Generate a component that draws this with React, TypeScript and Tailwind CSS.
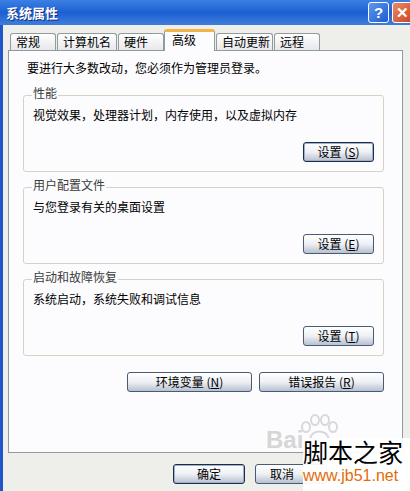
import type { ReactNode } from "react";

const XpButton = ({
  children,
  width,
  focus = false,
}: {
  children: ReactNode;
  width: string;
  focus?: boolean;
}) => (
  <button
    className={`${width} h-[20px] shrink-0 rounded-[3px] border ${
      focus
        ? "border-[#1c2c44] shadow-[inset_0_0_0_1px_#9fb0cb]"
        : "border-[#485a74]"
    } bg-gradient-to-b from-[#ffffff] via-[#eef0f4] to-[#b7c1d2] text-[12px] leading-[14px] text-black`}
  >
    {children}
  </button>
);

const Tab = ({
  label,
  width,
  ml,
  active = false,
}: {
  label: string;
  width: string;
  ml: string;
  active?: boolean;
}) =>
  active ? (
    <div
      className={`${width} ${ml} relative z-10 h-[22px] -mb-px rounded-t-[3px] border border-b-0 border-[#919b9c] border-t-[3px] border-t-[#f3b447] bg-[#fcfcfe] pl-[7px] pt-[1px] text-[12px] leading-[14px] text-black`}
    >
      {label}
    </div>
  ) : (
    <div
      className={`${width} ${ml} h-[17px] rounded-t-[3px] border border-b-0 border-[#919b9c] bg-gradient-to-b from-[#ffffff] to-[#e7e8ec] pl-[5px] pt-[1px] text-[12px] leading-[14px] text-black`}
    >
      {label}
    </div>
  );

const Group = ({
  title,
  text,
  hot,
  mt,
}: {
  title: string;
  text: string;
  hot: string;
  mt: string;
}) => (
  <div
    className={`relative ${mt} h-[77px] w-[361px] rounded-[3px] border border-[#d3d3c6] pl-[9px] pt-[12px]`}
  >
    <span className="absolute -top-[10px] left-[8px] bg-[#fcfcfe] px-px text-[12px] leading-[14px] text-[#3a3a3a]">
      {title}
    </span>
    <div className="text-[12px] leading-[14px] text-black">{text}</div>
    <div className="mt-[20px] flex justify-end pr-[9px]">
      <XpButton width="w-[71px]" focus={hot === "S"}>
        设置 (<u>{hot}</u>)
      </XpButton>
    </div>
  </div>
);

const App = () => {
  return (
    <div className="relative flex h-[491px] w-[410px] flex-col overflow-hidden bg-[#eeeeeb] font-['Noto_Sans_CJK_SC',sans-serif]">
      {/* Title bar */}
      <div className="flex h-[25px] shrink-0 items-center bg-gradient-to-b from-[#3b80e4] via-[#1d5fd2] to-[#3f7ddc] pl-[6px]">
        <span className="text-[13px] font-bold leading-[16px] text-white [text-shadow:1px_1px_0_#0c2f80]">
          系统属性
        </span>
        <div className="ml-auto mr-[-3px] flex gap-[3px]">
          <div className="flex h-[21px] w-[21px] items-center justify-center rounded-[3px] border border-white bg-gradient-to-br from-[#5d97f0] to-[#1e5bd0] font-['Liberation_Sans',sans-serif] text-[15px] font-bold leading-none text-white">
            ?
          </div>
          <div className="flex h-[21px] w-[21px] items-center justify-center rounded-[3px] border border-white bg-gradient-to-br from-[#ec8a66] to-[#c9421d] font-['Liberation_Sans',sans-serif] text-[15px] font-bold leading-none text-white">
            ✕
          </div>
        </div>
      </div>

      {/* Body */}
      <div className="flex flex-1 flex-col border-l-[3px] border-[#1f55c8] pl-[5px] pt-[4px]">
        {/* Tabs */}
        <div className="flex h-[21px] items-end">
          <Tab label="常规" width="w-[46px]" ml="ml-[2px]" />
          <Tab label="计算机名" width="w-[60px]" ml="ml-[1px]" />
          <Tab label="硬件" width="w-[46px]" ml="ml-[1px]" />
          <Tab label="高级" width="w-[51px]" ml="ml-0" active />
          <Tab label="自动更新" width="w-[57px]" ml="ml-[1px]" />
          <Tab label="远程" width="w-[46px]" ml="ml-[1px]" />
        </div>

        {/* Tab panel */}
        <div className="flex h-[403px] w-[395px] flex-col border border-[#919b9c] bg-[#fcfcfe] pl-[14px] pt-[10px]">
          <div className="ml-[4px] text-[12px] leading-[14px] text-black">
            要进行大多数改动，您必须作为管理员登录。
          </div>
          <Group
            title="性能"
            text="视觉效果，处理器计划，内存使用，以及虚拟内存"
            hot="S"
            mt="mt-[20px]"
          />
          <Group
            title="用户配置文件"
            text="与您登录有关的桌面设置"
            hot="E"
            mt="mt-[15px]"
          />
          <Group
            title="启动和故障恢复"
            text="系统启动，系统失败和调试信息"
            hot="T"
            mt="mt-[15px]"
          />
          <div className="mt-[16px] flex w-[361px] justify-end gap-[7px]">
            <XpButton width="w-[125px]">
              环境变量 (<u>N</u>)
            </XpButton>
            <XpButton width="w-[125px]">
              错误报告 (<u>R</u>)
            </XpButton>
          </div>
        </div>

        {/* Dialog buttons */}
        <div className="ml-[165px] mt-[11px] flex gap-[10px]">
          <XpButton width="w-[72px]" focus>
            确定
          </XpButton>
          <button className="h-[20px] w-[72px] shrink-0 rounded-[3px] border border-[#485a74] bg-gradient-to-b from-[#ffffff] via-[#eef0f4] to-[#b7c1d2] pl-[14px] text-left text-[12px] leading-[14px] text-black">
            取消
          </button>
        </div>
      </div>

      {/* Watermark overlay */}
      <div className="absolute left-[266px] top-[428px] font-['Liberation_Sans',sans-serif] text-[24px] font-bold leading-none text-[#d6d6d6]">
        Bai
      </div>
      <svg
        className="absolute left-[300px] top-[414px]"
        width="40"
        height="28"
        viewBox="0 0 40 28"
      >
        <g fill="none" stroke="#d8d8d8" strokeWidth="2">
          <ellipse cx="6" cy="13" rx="4" ry="5" />
          <ellipse cx="15" cy="6" rx="4" ry="5" />
          <ellipse cx="25" cy="6" rx="4" ry="5" />
          <ellipse cx="33" cy="13" rx="4" ry="5" />
          <path d="M10 25 C12 15 26 15 29 25 Z" />
        </g>
      </svg>
      <div className="absolute left-[303px] top-[438px] flex h-[53px] w-[107px] flex-col bg-white/95 pt-[1px]">
        <span className="text-[25px] leading-[25px] text-black">脚本之家</span>
        <span className="mt-[4px] font-['Liberation_Sans',sans-serif] text-[16px] leading-[16px] text-[#e36c0a]">
          www.jb51.net
        </span>
      </div>
    </div>
  );
};

export default App;
